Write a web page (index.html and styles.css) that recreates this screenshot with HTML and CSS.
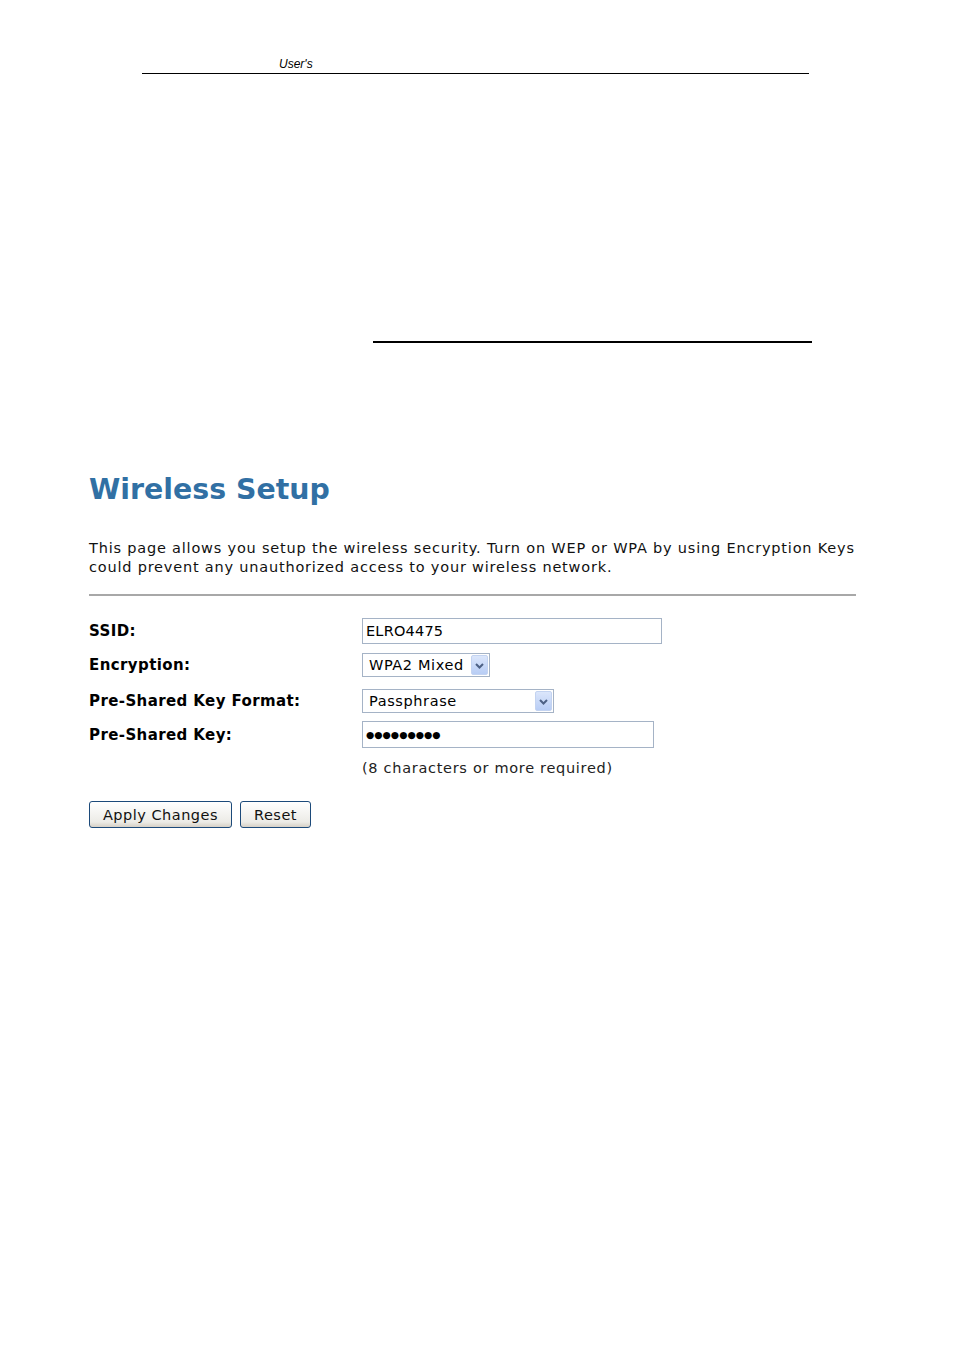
FILE: index.html
```html
<!DOCTYPE html>
<html>
<head>
<meta charset="utf-8">
<link rel="stylesheet" href="styles.css">
</head>
<body>
<div class="page">
  <header class="doc-header">
    <span class="doc-title">User's</span>
  </header>
  <div class="rule-wrap"><div class="rule"></div></div>

  <main class="panel">
    <h1 class="title">Wireless Setup</h1>
    <p class="intro">This page allows you setup the wireless security. Turn on WEP or WPA by using Encryption Keys could prevent any unauthorized access to your wireless network.</p>
    <div class="sep"></div>

    <div class="form">
      <div class="row r-ssid">
        <div class="label">SSID:</div>
        <div class="field"><div class="input w-ssid">ELRO4475</div></div>
      </div>
      <div class="row r-enc">
        <div class="label">Encryption:</div>
        <div class="field">
          <div class="select w-enc"><span class="sel-text">WPA2 Mixed</span>
            <span class="arrow"><svg width="15" height="15" viewBox="0 0 15 15"><path d="M4 6 L7.5 9.5 L11 6" fill="none" stroke="#4d6185" stroke-width="2"/></svg></span>
          </div>
        </div>
      </div>
      <div class="row r-fmt">
        <div class="label">Pre-Shared Key Format:</div>
        <div class="field">
          <div class="select w-fmt"><span class="sel-text">Passphrase</span>
            <span class="arrow"><svg width="15" height="15" viewBox="0 0 15 15"><path d="M4 6 L7.5 9.5 L11 6" fill="none" stroke="#4d6185" stroke-width="2"/></svg></span>
          </div>
        </div>
      </div>
      <div class="row r-key">
        <div class="label">Pre-Shared Key:</div>
        <div class="field"><div class="input w-key dots">●●●●●●●●●</div></div>
      </div>
      <div class="row r-note">
        <div class="label"></div>
        <div class="field note">(8 characters or more required)</div>
      </div>
    </div>

    <div class="buttons">
      <button class="btn b-apply">Apply Changes</button>
      <button class="btn b-reset">Reset</button>
    </div>
  </main>
</div>
</body>
</html>
```
FILE: styles.css
```css
html, body { margin: 0; padding: 0; background: #fff; }
body { font-family: "DejaVu Sans", Verdana, sans-serif; color: #000; }
.page { width: 954px; height: 1350px; position: relative; }

.doc-header {
  margin-left: 142px; width: 667px;
  padding-top: 57px; height: 16px;
  border-bottom: 1px solid #000;
  box-sizing: content-box;
}
.doc-title {
  display: block; margin-left: 137px;
  font-family: "Liberation Sans", Arial, sans-serif;
  font-style: italic; font-size: 12px; line-height: 14px;
}
.rule-wrap { padding-top: 267px; }
.rule { margin-left: 373px; width: 439px; height: 2px; background: #000; }

.panel { margin-left: 89px; width: 767px; padding-top: 129px; }
.title {
  margin: 0; font-size: 28.4px; font-weight: bold; color: #3170a4;
  line-height: 36px; letter-spacing: 0px;
}
.intro {
  margin: 31px 0 0 0; font-size: 14.5px; line-height: 19px; color: #111;
  letter-spacing: 0.8px;
}
.sep { margin-top: 17px; height: 2px; background: #a8a8a8; }

.form { margin-top: 22px; }
.row { display: flex; align-items: center; }
.label { width: 273px; font-weight: bold; font-size: 15px; letter-spacing: 0.4px; }
.field { font-size: 15px; }
.r-ssid { height: 26px; }
.r-enc { height: 24px; margin-top: 9px; }
.r-fmt { height: 24px; margin-top: 12px; }
.r-key { height: 27px; margin-top: 8px; }
.r-note { margin-top: 8px; height: 24px; }

.input {
  box-sizing: border-box; height: 26px; border: 1px solid #a5b3c6;
  padding: 0 3px; line-height: 24px; font-size: 14.5px; background: #fff;
  letter-spacing: 0.2px;
}
.w-ssid { width: 300px; }
.w-key { width: 292px; height: 27px; }
.dots { font-size: 9.5px; letter-spacing: 0; line-height: 25px; }

.select {
  box-sizing: border-box; height: 24px; border: 1px solid #a5b3c6;
  display: flex; align-items: center; justify-content: space-between;
  padding: 0 1px 0 6px; font-size: 14.5px; background: #fff;
  letter-spacing: 0.6px;
}
.w-enc { width: 128px; }
.w-fmt { width: 192px; }
.arrow {
  width: 17px; height: 20px; box-sizing: border-box;
  background: linear-gradient(#dbe6fb, #b8cdf5);
  border: 1px solid #c3d3f1; border-radius: 2px;
  display: flex; align-items: center; justify-content: center;
}
.arrow svg { display: block; }
.note { font-size: 14.5px; color: #222; letter-spacing: 0.7px; }

.buttons { margin-top: 21px; display: flex; gap: 8px; }
.btn {
  font-family: "DejaVu Sans", Verdana, sans-serif; font-size: 14.5px;
  height: 27px; box-sizing: border-box; padding: 0 10px;
  border: 1px solid #1c4a7a; border-radius: 3px;
  background: linear-gradient(#ffffff, #ecebe6 80%, #d6d0c5);
  color: #111; letter-spacing: 0.5px;
}
.b-apply { width: 143px; }
.b-reset { width: 71px; }
```
